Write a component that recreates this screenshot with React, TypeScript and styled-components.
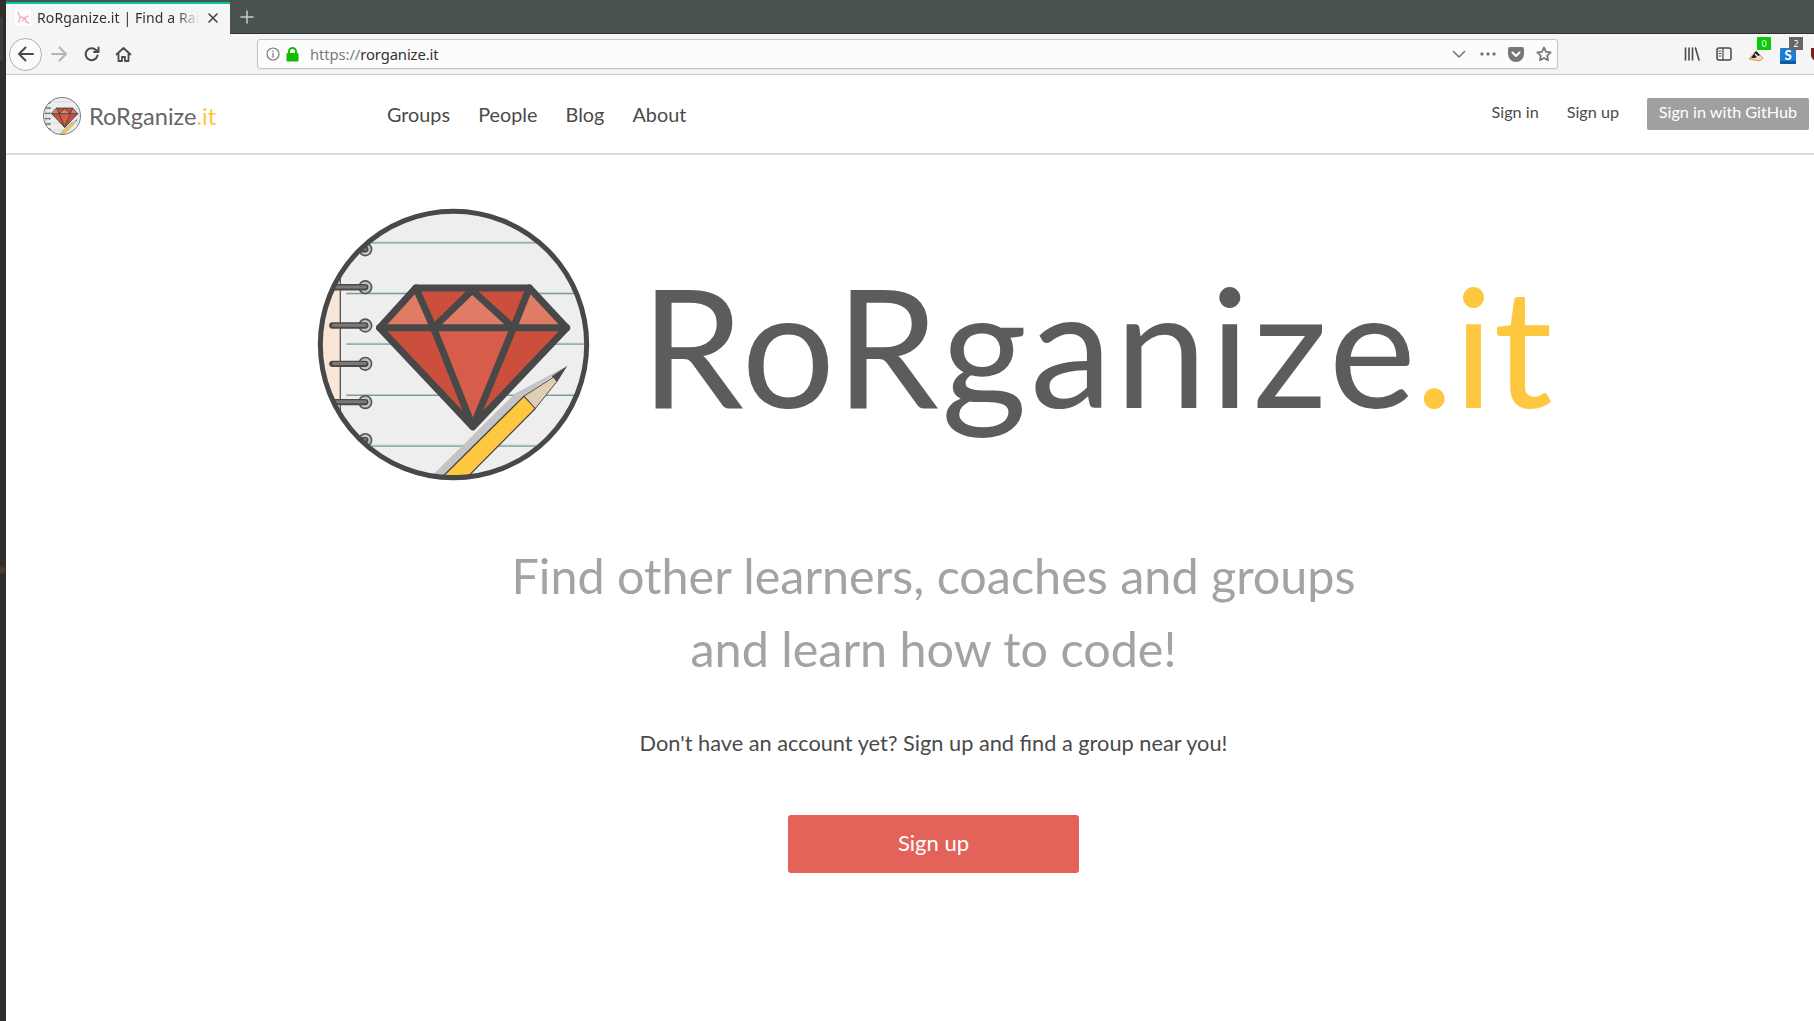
import React from "react";
import styled, { createGlobalStyle } from "styled-components";

const Global = createGlobalStyle`
  html, body { margin: 0; padding: 0; background: #fff; overflow: hidden; }
  body { font-family: Lato, "Liberation Sans", sans-serif; }
  #root { height: 1021px; }
`;

const Screen = styled.div`
  display: flex;
  width: 1814px;
  height: 1021px;
  overflow: hidden;
`;
const DesktopEdge = styled.div`
  flex: 0 0 6px;
  background:
    radial-gradient(circle 5px at 2px 570px, #6a3a3a, transparent),
    linear-gradient(#3d3d3b, #3d3d3b) 0 17px / 3px 44px no-repeat,
    #2f2e2a;
`;
const Window = styled.div`
  flex: 1;
  min-width: 0;
  display: flex;
  flex-direction: column;
`;

const TabBar = styled.div`
  height: 34px;
  box-sizing: border-box;
  background: #4a5250;
  border-bottom: 1px solid #2e3332;
  display: flex;
  align-items: flex-start;
`;
const Tab = styled.div`
  width: 224px;
  height: 34px;
  margin-top: 2px;
  box-sizing: border-box;
  background: #f5f5f5;
  border-top: 2px solid #00c8a0;
  display: flex;
  align-items: center;
  padding: 0 11px 5px 9px;
  gap: 6px;
`;
const Favicon = styled.span`
  flex: 0 0 16px;
  height: 16px;
  background: #fff;
  display: flex;
`;
const TabTitle = styled.span`
  flex: 1;
  min-width: 0;
  overflow: hidden;
  white-space: nowrap;
  font: 14px "Noto Sans", sans-serif;
  letter-spacing: 0.1px;
  color: #333;
  mask-image: linear-gradient(to right, #000 85%, transparent 99%);
`;
const NewTab = styled.span`
  display: flex;
  margin: 10px 0 0 10px;
`;

const Toolbar = styled.div`
  height: 41px;
  box-sizing: border-box;
  background: #f5f5f5;
  border-bottom: 1px solid #c8c8c8;
  display: flex;
  align-items: center;
  position: relative;
  padding-left: 3px;
  overflow: hidden;
`;
const BackButton = styled.span`
  flex: 0 0 33px;
  height: 33px;
  box-sizing: border-box;
  border: 1px solid #b0b0b0;
  border-radius: 50%;
  background: #fbfbfb;
  display: flex;
  align-items: center;
  justify-content: center;
`;
const ToolIcon = styled.span<{ $left?: number }>`
  flex: 0 0 18px;
  height: 18px;
  display: flex;
  align-items: center;
  justify-content: center;
  margin-left: ${(p) => p.$left ?? 0}px;
  position: relative;
`;
const UrlBar = styled.div`
  flex: 0 0 1301px;
  height: 30px;
  margin-left: 125px;
  margin-right: 125px;
  box-sizing: border-box;
  border: 1px solid #c4c4c4;
  border-radius: 3px;
  background: #fcfcfc;
  box-shadow: 0 1px 2px rgba(0, 0, 0, 0.06);
  display: flex;
  align-items: center;
  padding: 0 5px 0 8px;
`;
const Url = styled.span`
  flex: 1;
  margin-left: 11px;
  font: 14.8px "Noto Sans", sans-serif;
  letter-spacing: -0.1px;
  color: #333;
`;
const UrlScheme = styled.span`
  color: #737c85;
`;
const Badge = styled.span<{ $bg: string }>`
  position: absolute;
  left: 10px;
  top: -8px;
  width: 14px;
  height: 13px;
  background: ${(p) => p.$bg};
  color: #fff;
  font: 9px/13px "Noto Sans", sans-serif;
  text-align: center;
`;

const Nav = styled.nav`
  height: 80px;
  box-sizing: border-box;
  border-bottom: 2px solid #ddd;
  display: flex;
  align-items: center;
  padding: 0 5px 0 37px;
`;
const Brand = styled.div`
  display: flex;
  align-items: center;
  gap: 8px;
  width: 344px;
  font-size: 23.6px;
  color: #666;
  padding-top: 3px;
`;
const Accent = styled.span`
  color: #fdc840;
`;
const MainLinks = styled.div`
  display: flex;
  flex: 1;
  gap: 28.2px;
  margin-top: -1px;
`;
const MainLink = styled.a`
  font-size: 19.8px;
  color: #4a4a4a;
`;
const SideLinks = styled.div`
  display: flex;
  align-items: center;
  gap: 28px;
`;
const SideLink = styled.a`
  font-size: 16.2px;
  color: #4a4a4a;
  padding-bottom: 6px;
`;
const GithubButton = styled.a`
  height: 32px;
  width: 162px;
  border-radius: 2px;
  background: #a0a0a0;
  color: #fff;
  font-size: 16.2px;
  line-height: 28px;
  text-align: center;
`;

const Hero = styled.main`
  flex: 1;
  display: flex;
  flex-direction: column;
  align-items: center;
  padding: 53px 0 0 47px;
`;
const HeroLogo = styled.div`
  display: flex;
  align-items: center;
  gap: 50px;
  margin-left: 3px;
`;
const Wordmark = styled.div`
  font-size: 165px;
  line-height: 266px;
  padding-bottom: 2px;
  color: #5c5c5c;
  letter-spacing: 3px;
  white-space: nowrap;
`;
const WordmarkAccent = styled(Accent)`
  letter-spacing: 0;
  margin-left: -4px;
`;
const Tagline = styled.h1`
  margin: 58px 0 0;
  font-size: 48.5px;
  font-weight: 400;
  line-height: 73px;
  color: #a3a3a3;
  text-align: center;
`;
const Lead = styled.p`
  margin: 43px 0 0;
  font-size: 21.75px;
  line-height: 30px;
  color: #4a4a4a;
`;
const SignUp = styled.a`
  margin-top: 57px;
  width: 291px;
  height: 58px;
  border-radius: 3px;
  background: #e3635b;
  color: #fff;
  font-size: 22px;
  line-height: 56px;
  text-align: center;
`;

const Logo = ({ size, id }: { size: number; id: string }) => (
  <svg width={size} height={size} viewBox="50 38 820 820" style={{ flexShrink: 0 }}>
    <defs>
      <clipPath id={id}>
        <circle cx="460" cy="448" r="400" />
      </clipPath>
    </defs>
    <circle cx="460" cy="448" r="400" fill="#eeeeee" />
    <g clipPath={`url(#${id})`}>
      <rect x="50" y="200" width="70" height="500" fill="#f8e6d8" />
      <line x1="120" y1="230" x2="120" y2="660" stroke="#555" strokeWidth="4" />
      {[143, 295, 447, 601, 753].map((y) => (
        <g key={y}>
          <line x1="138" y1={y - 3} x2="860" y2={y - 3} stroke="#d4d4d4" strokeWidth="3" />
          <line x1="138" y1={y} x2="860" y2={y} stroke="#6f9f9f" strokeWidth="4" />
        </g>
      ))}
      {[162, 276, 391, 506, 621, 735].map((y) => (
        <g key={y}>
          <circle cx="195" cy={y} r="19" fill="#c4c4c4" stroke="#555" strokeWidth="5" />
          <line x1="96" y1={y} x2="195" y2={y} stroke="#4a4a4a" strokeWidth="19" strokeLinecap="round" />
          <line x1="100" y1={y - 1} x2="195" y2={y - 1} stroke="#7a7a7a" strokeWidth="9" strokeLinecap="round" />
        </g>
      ))}
      <polygon points="347,278 688,278 800,398 238,398" fill="#e07b66" />
      <polygon points="347,278 688,278 640,398 516,285 400,398" fill="#cc4f3d" />
      <polygon points="238,398 800,398 518,695" fill="#cc4f3d" />
      <polygon points="400,398 640,398 518,695" fill="#d65d4a" />
      <polygon points="516,285 640,398 400,398" fill="#e07b66" />
      <g fill="none" stroke="#484848" strokeWidth="21" strokeLinejoin="round" strokeLinecap="round">
        <polygon points="347,278 688,278 800,398 518,695 238,398" />
        <line x1="238" y1="398" x2="800" y2="398" />
        <polyline points="347,278 400,398 518,695 640,398 688,278" />
        <polyline points="400,398 516,285 640,398" />
      </g>
      <polygon points="400,838 645,595 802,512 672,603 432,842" fill="#c4c4c4" />
      <polygon points="430,842 672,603 706,640 506,842" fill="#fdc840" stroke="#484848" strokeWidth="4" />
      <polygon points="672,603 762,545 770,560 706,640" fill="#e0ceb4" stroke="#484848" strokeWidth="3" />
      <polygon points="755,543 802,512 772,560" fill="#484848" />
    </g>
    <circle cx="460" cy="448" r="400" fill="none" stroke="#484848" strokeWidth="15" />
  </svg>
);

const Stroke = styled.svg`
  display: block;
  fill: none;
  stroke-linecap: round;
  stroke-linejoin: round;
`;

export default function App() {
  return (
    <>
      <Global />
      <Screen>
        <DesktopEdge />
        <Window>
          <TabBar>
            <Tab>
              <Favicon>
                <Stroke width="16" height="16" viewBox="0 0 16 16" stroke="#f5b5bf" strokeWidth="1.6">
                  <path d="M3 2l2 5 5 1 3-2M5 7l-1 5M10 8l1 4 3 1M10 8l-3 3" />
                </Stroke>
              </Favicon>
              <TabTitle>RoRganize.it | Find a Rails Group</TabTitle>
              <Stroke width="12" height="12" viewBox="0 0 12 12" stroke="#444" strokeWidth="1.6">
                <path d="M2 2l8 8M10 2l-8 8" />
              </Stroke>
            </Tab>
            <NewTab>
              <Stroke width="14" height="14" viewBox="0 0 14 14" stroke="#c8cccb" strokeWidth="1.5">
                <path d="M7 1v12M1 7h12" />
              </Stroke>
            </NewTab>
          </TabBar>

          <Toolbar>
            <BackButton>
              <Stroke width="18" height="18" viewBox="0 0 18 18" stroke="#4a4a4a" strokeWidth="2">
                <path d="M16 9H2M8.5 2.5L2 9l6.5 6.5" />
              </Stroke>
            </BackButton>
            <ToolIcon $left={8}>
              <Stroke width="18" height="18" viewBox="0 0 18 18" stroke="#b4b4b4" strokeWidth="2">
                <path d="M2 9h14M9.5 2.5L16 9l-6.5 6.5" />
              </Stroke>
            </ToolIcon>
            <ToolIcon $left={15}>
              <Stroke width="16" height="16" viewBox="0 0 16 16" stroke="#4a4a4a" strokeWidth="2">
                <path d="M13.5 9.5A6 6 0 1 1 12 4l2 1.5M14.5 1.5v4.5H10" />
              </Stroke>
            </ToolIcon>
            <ToolIcon $left={13}>
              <Stroke width="17" height="17" viewBox="0 0 17 17" stroke="#4a4a4a" strokeWidth="1.8">
                <path d="M1.5 8.5L8.5 2l7 6.5M3.5 7.5V15h3.5v-4h3v4h3.5V7.5" />
              </Stroke>
            </ToolIcon>
            <UrlBar>
              <Stroke width="14" height="14" viewBox="0 0 14 14" stroke="#7a7a7a" strokeWidth="1.2">
                <circle cx="7" cy="7" r="6" />
                <path d="M7 6.2V10.2M7 3.8v.6" />
              </Stroke>
              <svg width="13" height="15" viewBox="0 0 13 15" style={{ marginLeft: 6 }}>
                <path d="M3 6V4.5a3.5 3.5 0 0 1 7 0V6" fill="none" stroke="#12bc00" strokeWidth="2" />
                <rect x="0.5" y="6" width="12" height="8.5" rx="1" fill="#12bc00" />
              </svg>
              <Url>
                <UrlScheme>https://</UrlScheme>rorganize.it
              </Url>
              <Stroke width="14" height="14" viewBox="0 0 14 14" stroke="#777" strokeWidth="1.6">
                <path d="M1.5 4.5L7 10l5.5-5.5" />
              </Stroke>
              <svg width="16" height="4" viewBox="0 0 16 4" style={{ marginLeft: 14 }}>
                <circle cx="2" cy="2" r="1.7" fill="#777" />
                <circle cx="8" cy="2" r="1.7" fill="#777" />
                <circle cx="14" cy="2" r="1.7" fill="#777" />
              </svg>
              <svg width="16" height="15" viewBox="0 0 16 15" style={{ marginLeft: 12 }}>
                <path d="M2 0h12a2 2 0 0 1 2 2v5a8 8 0 0 1-16 0V2a2 2 0 0 1 2-2z" fill="#777" />
                <path d="M4.5 5.5L8 9l3.5-3.5" fill="none" stroke="#fff" strokeWidth="2" strokeLinecap="round" strokeLinejoin="round" />
              </svg>
              <Stroke width="16" height="16" viewBox="0 0 16 16" stroke="#777" strokeWidth="1.8" style={{ marginLeft: 12 }}>
                <path d="M8 1.5l2 4.3 4.7.6-3.5 3.2.9 4.7L8 12l-4.1 2.3.9-4.7L1.3 6.4 6 5.8z" />
              </Stroke>
            </UrlBar>
            <ToolIcon>
              <Stroke width="16" height="16" viewBox="0 0 16 16" stroke="#4a4a4a" strokeWidth="1.6">
                <path d="M1.5 2v12M5 2v12M8.5 2v12M11.5 2l3.5 12" />
              </Stroke>
            </ToolIcon>
            <ToolIcon $left={14}>
              <Stroke width="16" height="14" viewBox="0 0 16 14" stroke="#4a4a4a" strokeWidth="1.5">
                <rect x="1" y="1" width="14" height="12" rx="2" />
                <path d="M7 1v12M3 4h2M3 6.500h2M3 9h2" strokeWidth="1.2" />
              </Stroke>
            </ToolIcon>
            <ToolIcon $left={14}>
              <svg width="17" height="13" viewBox="0 0 17 13" style={{ marginTop: 2 }}>
                <path d="M1 10l7-8 7 7-3 3z" fill="#f0d8c0" stroke="#e0935a" strokeWidth="1" />
                <path d="M3 9l5-7 4 4-5 3z" fill="#222" />
                <path d="M7 5l3 3" stroke="#fff" strokeWidth="1.3" />
              </svg>
              <Badge $bg="#0ac80a">0</Badge>
            </ToolIcon>
            <ToolIcon $left={14}>
              <svg width="16" height="16" viewBox="0 0 16 16" style={{ marginTop: 3 }}>
                <rect width="16" height="16" rx="1" fill="#1b7ed6" />
                <rect y="13" width="16" height="3" fill="#0b5aa5" />
                <text x="8" y="12" textAnchor="middle" fontFamily="Lato, sans-serif" fontWeight="900" fontSize="13" fill="#fff">S</text>
              </svg>
              <Badge $bg="#666666">2</Badge>
            </ToolIcon>
            <ToolIcon $left={14}>
              <svg width="18" height="14" viewBox="0 0 18 14" style={{ marginTop: 2 }}>
                <path d="M0 0h18v7a9 7 0 0 1-18 0z" fill="#7a1f1f" />
              </svg>
            </ToolIcon>
          </Toolbar>

          <Nav>
            <Brand>
              <Logo size={38} id="logo-small" />
              <span>
                RoRganize<Accent>.it</Accent>
              </span>
            </Brand>
            <MainLinks>
              <MainLink>Groups</MainLink>
              <MainLink>People</MainLink>
              <MainLink>Blog</MainLink>
              <MainLink>About</MainLink>
            </MainLinks>
            <SideLinks>
              <SideLink>Sign in</SideLink>
              <SideLink>Sign up</SideLink>
              <GithubButton>Sign in with GitHub</GithubButton>
            </SideLinks>
          </Nav>

          <Hero>
            <HeroLogo>
              <Logo size={273} id="logo-large" />
              <Wordmark>
                RoRganize<WordmarkAccent>.it</WordmarkAccent>
              </Wordmark>
            </HeroLogo>
            <Tagline>
              Find other learners, coaches and groups
              <br />
              and learn how to code!
            </Tagline>
            <Lead>Don't have an account yet? Sign up and find a group near you!</Lead>
            <SignUp>Sign up</SignUp>
          </Hero>
        </Window>
      </Screen>
    </>
  );
}
